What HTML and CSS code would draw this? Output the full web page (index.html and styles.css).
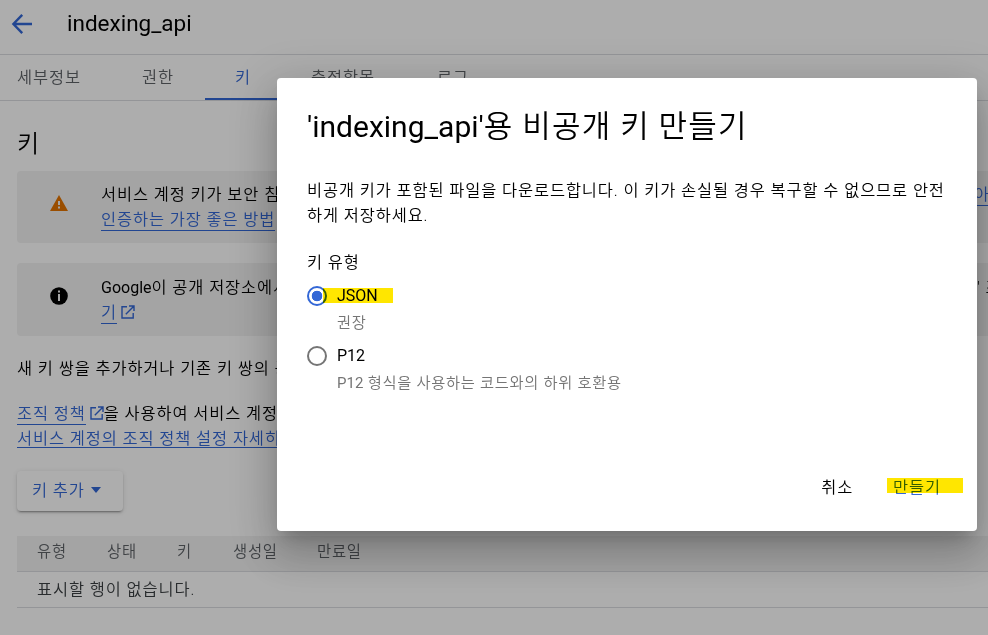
FILE: index.html
```html
<!DOCTYPE html>
<html lang="ko">
<head>
<meta charset="utf-8">
<title>indexing_api</title>
<link rel="stylesheet" href="styles.css">
</head>
<body>
<div class="page">
  <header class="topbar">
    <svg class="back" width="24" height="24" viewBox="0 0 24 24"><path d="M22 12H4M12.2 2.8 3.4 12l8.8 9.2" fill="none" stroke="#3367d6" stroke-width="2.4"/></svg>
    <h1 class="lat">indexing_api</h1>
  </header>
  <nav class="tabs">
    <span class="tab t1">세부정보</span><span class="tab t2">권한</span><span class="tab t3 active">키</span><span class="tab t4">측정항목</span><span class="tab t5">로그</span>
  </nav>
  <main>
    <h2>키</h2>
    <section class="notice warn">
      <svg class="nicon" width="18" height="16" viewBox="0 0 18 16"><path d="M9 0 18 16H0Z" fill="#e37400"/><path d="M8 6h2v4H8zM8 11.5h2v2H8z" fill="#f2f2f2"/></svg>
      <div class="lines">
        <div class="line"><span>서비스 계정 키가 보안 침</span><a class="tail">아</a></div>
        <div class="line"><a>인증하는 가장 좋은 방법</a></div>
      </div>
    </section>
    <section class="notice info">
      <svg class="nicon" width="18" height="18" viewBox="0 0 18 18"><circle cx="9" cy="9" r="8.8"/><path d="M8 3.5h2v2H8zM8 7h2v7H8z" fill="#f2f2f2"/></svg>
      <div class="lines">
        <div class="line"><span><span class="lat">Google</span>이 공개 저장소에서</span><span class="tail second">' 조</span></div>
        <div class="line"><a>기</a><svg class="ext" width="14" height="14" viewBox="0 0 14 14"><path d="M6 1.8H1V13h11.2V8M8 1h5v5M13 1 4.8 9.2" fill="none" stroke="#3367d6" stroke-width="1.4"/></svg></div>
      </div>
    </section>
    <p class="para">새 키 쌍을 추가하거나 기존 키 쌍의 공</p>
    <p class="para policy"><a>조직 정책</a><svg class="ext" width="14" height="14" viewBox="0 0 14 14"><path d="M6 1.8H1V13h11.2V8M8 1h5v5M13 1 4.8 9.2" fill="none" stroke="#3367d6" stroke-width="1.4"/></svg><span class="after">을 사용하여 서비스 계정</span></p>
    <p class="para"><a>서비스 계정의 조직 정책 설정 자세히</a></p>
    <button class="add">키 추가<svg width="10" height="6" viewBox="0 0 10 6"><path d="M0 0h10L5 6z" fill="#3367d6"/></svg></button>
    <div class="table">
      <div class="thead"><span class="c1">유형</span><span class="c2">상태</span><span class="c3">키</span><span class="c4">생성일</span><span>만료일</span></div>
      <div class="trow">표시할 행이 없습니다.</div>
    </div>
  </main>
</div>
<div class="backdrop">
  <div class="dialog">
    <h3><span class="lat">'indexing_api'</span>용 비공개 키 만들기</h3>
    <p class="desc">비공개 키가 포함된 파일을 다운로드합니다. 이 키가 손실될 경우 복구할 수 없으므로 안전<br>하게 저장하세요.</p>
    <div class="legend">키 유형</div>
    <div class="option"><span class="radio on"></span><span class="lat name">JSON</span><span class="marker m1"></span></div>
    <div class="hint">권장</div>
    <div class="option"><span class="radio"></span><span class="lat name">P12</span></div>
    <div class="hint"><span class="lat">P12</span> 형식을 사용하는 코드와의 하위 호환용</div>
    <div class="actions"><span>취소</span><span class="create">만들기<span class="marker m2"></span></span></div>
  </div>
</div>
</body>
</html>
```
FILE: styles.css
```css
* { box-sizing: border-box; }
body {
  margin: 0; width: 988px; height: 635px; overflow: hidden; position: relative;
  font: 350 16.4px/25px Roboto, "Noto Sans CJK KR", sans-serif;
  letter-spacing: .88px; color: #000; background: #fff; white-space: nowrap;
}
h1, h2, h3, p { margin: 0; font-weight: 350; }
.lat { letter-spacing: 0; font-size: 16px; font-weight: 400; }
.topbar { display: flex; align-items: center; height: 55px; padding: 0 0 7px 10px; border-bottom: 1px solid #dadce0; }
.topbar h1 { margin-left: 33px; font-size: 22.5px; font-weight: 400; }
.tabs { display: flex; height: 46px; border-bottom: 1px solid #dadce0; color: #5f6368; line-height: 46px; }
.tab { padding-left: 17px; height: 45px; }
.t1 { width: 125px; }
.t2 { width: 80px; }
.t3 { width: 80px; padding-left: 30px; }
.t4 { padding-left: 26px; width: 126px; }
.t5 { padding-left: 26px; }
.active { color: #3367d6; border-bottom: 2px solid #3367d6; }
main { padding-left: 17px; }
h2 { margin-top: 25px; height: 45px; font-size: 24px; line-height: 36px; }
a { color: #3367d6; box-shadow: inset 0 -1px #3367d6; }
.notice { display: flex; align-items: center; height: 72px; padding-left: 33px; background: #f2f2f2; border-radius: 4px 0 0 4px; }
.info { height: 73px; margin-top: 20px; }
.nicon { flex: none; margin-right: 33px; }
.warn .nicon { margin-top: -8px; }
.info .nicon { margin-top: -7px; }
.lines { flex: 1; min-width: 0; }
.line { display: flex; justify-content: space-between; height: 25px; }
.line:last-child { justify-content: flex-start; }
.line a, .policy a { height: 24px; }
.tail { width: 14px; }
.second { width: 11px; }
.ext { margin: 5px 0 0 4px; }
.para { height: 25px; }
.info + .para { margin: 20px 0; }
.policy { display: flex; }
.add {
  display: flex; align-items: center; gap: 6px; width: 106px; height: 40px; margin: 20px 0 25px; padding: 0 0 2px 15px;
  border: 0; border-radius: 4px; background: #fff; color: #3367d6; font: inherit; letter-spacing: inherit;
  box-shadow: 0 3px 1px -2px rgba(0,0,0,.2), 0 2px 2px rgba(0,0,0,.14), 0 1px 5px rgba(0,0,0,.12);
}
.table { color: #3c4043; }
.thead { display: flex; height: 36px; padding-left: 20px; background: #f2f2f2; border-bottom: 1px solid #dadce0; font-size: 15.4px; line-height: 33px; letter-spacing: .75px; color: #5f6368; }
.c1, .c2 { width: 70px; }
.c3 { width: 56px; }
.c4 { width: 84px; }
.trow { height: 36px; padding-left: 20px; border-bottom: 1px solid #dadce0; line-height: 35px; }
.backdrop { position: absolute; inset: 0; padding: 78px 0 0 277px; background: rgba(0,0,0,.32); }
.dialog {
  width: 700px; height: 453px; padding: 29px 30px 0; border-radius: 4px; background: #fff;
  box-shadow: 0 11px 15px -7px rgba(0,0,0,.2), 0 24px 38px 3px rgba(0,0,0,.14), 0 9px 46px 8px rgba(0,0,0,.12);
}
h3 { height: 70px; font-size: 31px; line-height: 40px; letter-spacing: 1.2px; }
h3 .lat { font-size: 30px; letter-spacing: 0; }
.desc { height: 72px; padding-top: 1px; }
.legend { height: 34px; padding-top: 1px; }
.option { display: flex; align-items: center; gap: 10px; height: 26px; position: relative; }
.name { padding-bottom: 1px; }
.radio { width: 20px; height: 20px; border: 2px solid #757575; border-radius: 50%; }
.on { border-color: #3367d6; background: radial-gradient(circle, #3367d6 0 5px, transparent 5.6px); }
.hint { height: 34px; padding-left: 30px; line-height: 29px; font-size: 15.3px; letter-spacing: .7px; color: #757575; }
.hint .lat { letter-spacing: 0; font-size: 15px; }
.marker { position: absolute; background: #ffe600; mix-blend-mode: multiply; }
.m1 { left: 16px; top: 5px; width: 70px; height: 15px; }
.actions { display: flex; justify-content: flex-end; gap: 40px; margin-top: 72px; padding-right: 6px; }
.create { position: relative; color: #3367d6; }
.m2 { left: -6px; top: 3px; width: 76px; height: 15px; }
```
